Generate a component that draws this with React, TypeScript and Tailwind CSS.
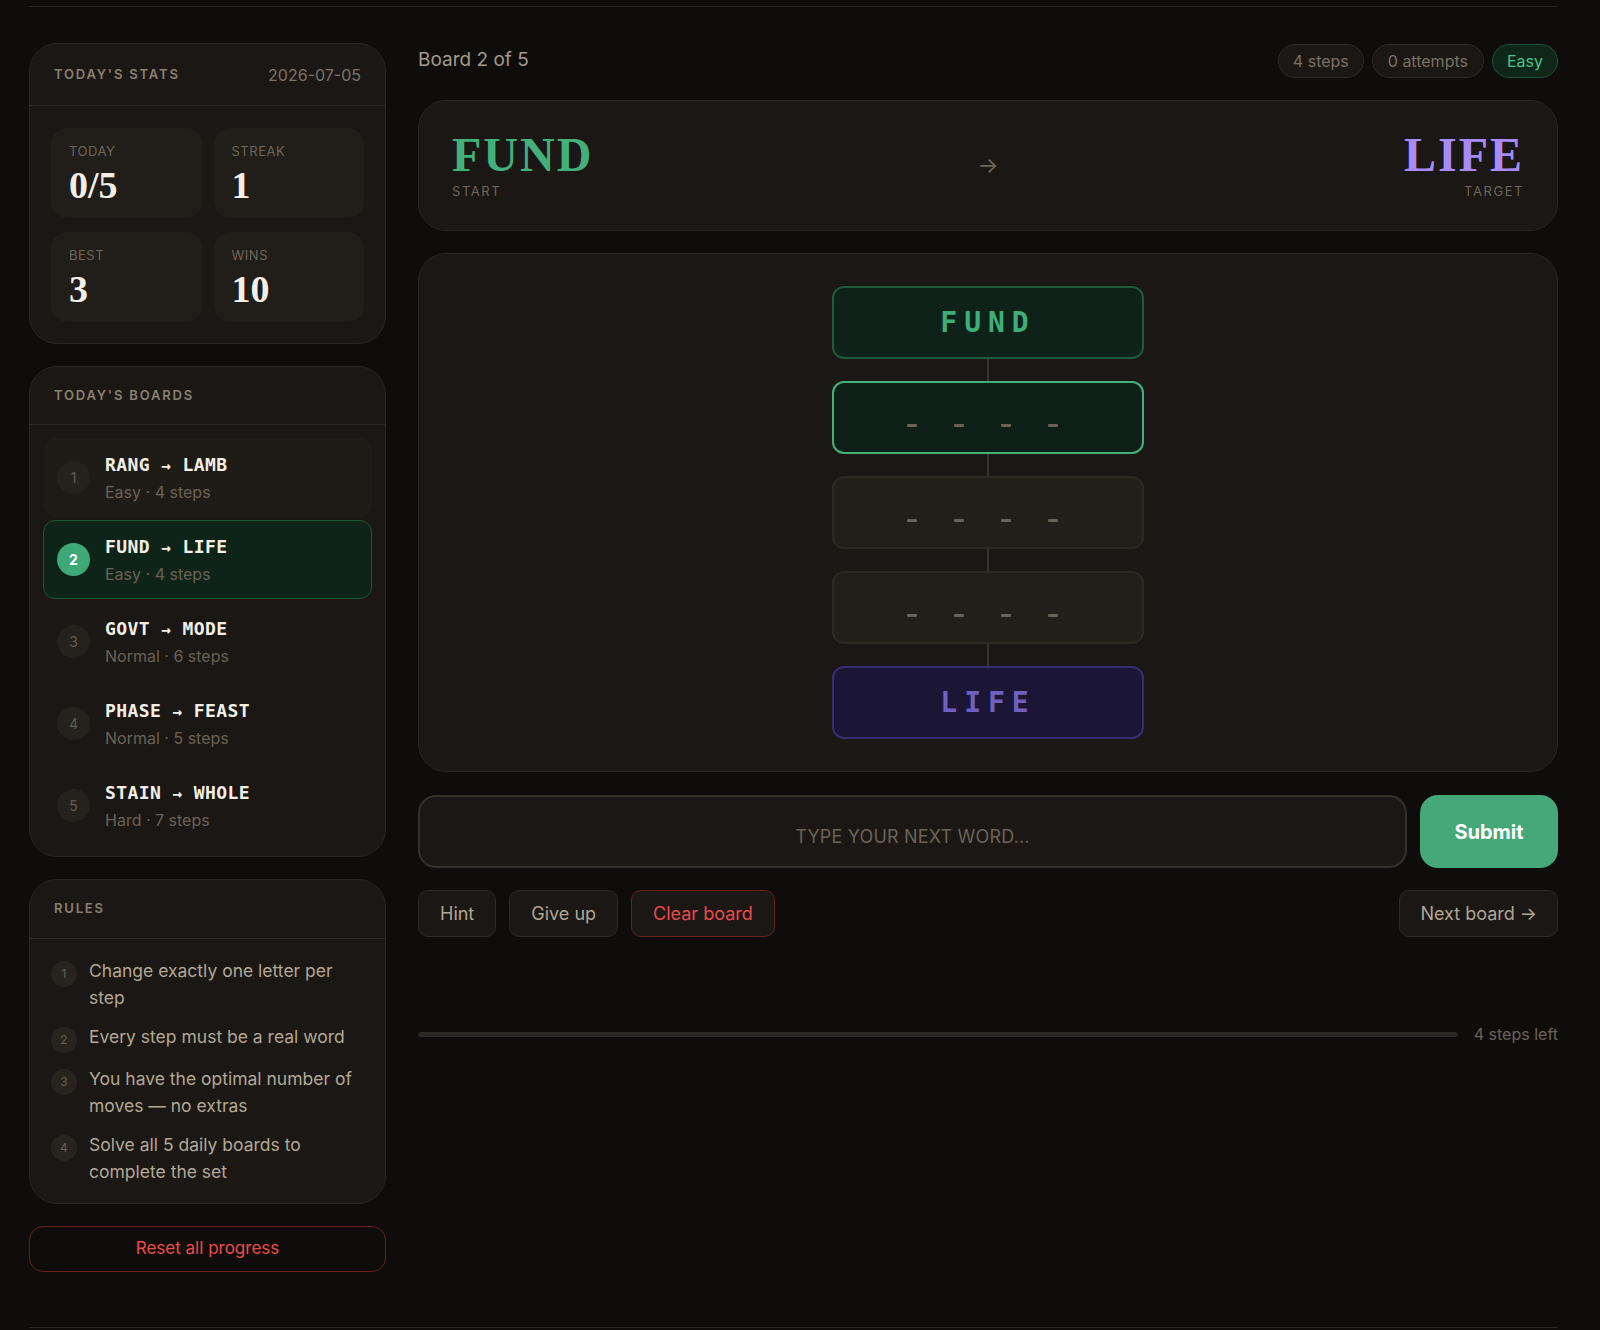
import { useState } from "react";

const boards = [
  { n: 1, from: "RANG", to: "LAMB", meta: "Easy · 4 steps", state: "done" },
  { n: 2, from: "FUND", to: "LIFE", meta: "Easy · 4 steps", state: "active" },
  { n: 3, from: "GOVT", to: "MODE", meta: "Normal · 6 steps", state: "idle" },
  { n: 4, from: "PHASE", to: "FEAST", meta: "Normal · 5 steps", state: "idle" },
  { n: 5, from: "STAIN", to: "WHOLE", meta: "Hard · 7 steps", state: "idle" },
];

const rules = [
  "Change exactly one letter per step",
  "Every step must be a real word",
  "You have the optimal number of moves — no extras",
  "Solve all 5 daily boards to complete the set",
];

const sans = "font-['Inter','Noto_Sans',sans-serif]";
const serif = "font-['Liberation_Serif','DejaVu_Serif',serif]";
const mono = "font-['DejaVu_Sans_Mono','Liberation_Mono',monospace]";

function StatTile({ label, value }: { label: string; value: string }) {
  return (
    <div className="h-[90px] rounded-[16px] bg-[#211d18] px-[18px] pt-[15px]">
      <div className="text-[13px] leading-[16px] tracking-[0.04em] text-[#6e665a]">{label}</div>
      <div className={`${serif} mt-[7px] text-[38px] leading-none font-bold text-[#f4efe6]`}>{value}</div>
    </div>
  );
}

function Dashes() {
  return (
    <div className="flex gap-[37px] pt-[16px] pr-[11px]">
      {[0, 1, 2, 3].map((i) => (
        <span key={i} className="h-[3px] w-[10px] rounded-[1px] bg-[#6a6256]" />
      ))}
    </div>
  );
}

export default function App() {
  const [word, setWord] = useState("");

  return (
    <div className={`${sans} min-h-[1330px] bg-[#0f0d0b] pt-[6px]`}>
      <div className="ml-[29px] w-[1529px] border-t border-[#2a2621] pt-[36px]">
        <div className="grid grid-cols-[357px_1fr] gap-[32px]">
          {/* sidebar */}
          <div className="flex flex-col gap-[22px]">
            <div className="rounded-[28px] border border-[#2a2621] bg-[#1a1714]">
              <div className="flex h-[62px] items-center justify-between border-b border-[#2e2a24] px-[24px]">
                <span className="text-[13px] font-semibold tracking-[0.14em] text-[#8a8071]">TODAY'S STATS</span>
                <span className="text-[16px] text-[#7d7466]">2026-07-05</span>
              </div>
              <div className="grid grid-cols-2 gap-x-[12px] gap-y-[14px] px-[21px] pt-[22px] pb-[21px]">
                <StatTile label="TODAY" value="0/5" />
                <StatTile label="STREAK" value="1" />
                <StatTile label="BEST" value="3" />
                <StatTile label="WINS" value="10" />
              </div>
            </div>

            <div className="rounded-[28px] border border-[#2a2621] bg-[#1a1714]">
              <div className="flex h-[58px] items-center border-b border-[#2e2a24] px-[24px]">
                <span className="text-[13px] font-semibold tracking-[0.14em] text-[#8a8071]">TODAY'S BOARDS</span>
              </div>
              <div className="flex flex-col gap-[3px] p-[13px] pb-[11px]">
                {boards.map((b) => (
                  <div
                    key={b.n}
                    className={`flex h-[79px] items-center gap-[15px] rounded-[12px] border px-[13px] ${
                      b.state === "active"
                        ? "border-[#1f5637] bg-[#0f2418]"
                        : b.state === "done"
                          ? "border-transparent bg-[#1f1b17]"
                          : "border-transparent"
                    }`}
                  >
                    <div
                      className={`flex h-[33px] w-[33px] shrink-0 items-center justify-center rounded-full text-[14px] ${
                        b.state === "active" ? "bg-[#3fa877] font-bold text-white" : "bg-[#25211c] text-[#645c50]"
                      }`}
                    >
                      {b.n}
                    </div>
                    <div className="flex flex-col gap-[5px]">
                      <div className={`${mono} text-[18px] leading-[22px] font-bold tracking-[0.4px] text-[#f4efe6]`}>
                        {b.from} <span className="text-[16px]">→</span> {b.to}
                      </div>
                      <div className="text-[16px] leading-[20px] text-[#6a6256]">{b.meta}</div>
                    </div>
                  </div>
                ))}
              </div>
            </div>

            <div className="rounded-[28px] border border-[#2a2621] bg-[#1a1714]">
              <div className="flex h-[59px] items-center border-b border-[#2e2a24] px-[24px]">
                <span className="text-[13px] font-semibold tracking-[0.14em] text-[#8a8071]">RULES</span>
              </div>
              <div className="flex flex-col gap-[12px] px-[21px] pt-[18px] pb-[18px]">
                {rules.map((r, i) => (
                  <div key={i} className="flex gap-[12px]">
                    <div className="mt-[4px] flex h-[26px] w-[26px] shrink-0 items-center justify-center rounded-full bg-[#27231e] text-[12px] text-[#675f53]">
                      {i + 1}
                    </div>
                    <p className="text-[17.5px] leading-[27px] text-[#b3a894]">{r}</p>
                  </div>
                ))}
              </div>
            </div>

            <button className="h-[46px] rounded-[14px] border border-[#6a2020] text-[17px] text-[#ec4a4a]">
              Reset all progress
            </button>
          </div>

          {/* main */}
          <div className="flex flex-col">
            <div className="flex h-[35px] items-center justify-between">
              <span className="text-[19px] text-[#a39a8b]">Board 2 of 5</span>
              <div className="flex gap-[8px]">
                <span className="flex h-[34px] items-center rounded-full border border-[#2e2a24] bg-[#1a1714] px-[14px] text-[16px] text-[#7a7165]">
                  4 steps
                </span>
                <span className="flex h-[34px] items-center rounded-full border border-[#2e2a24] bg-[#1a1714] px-[15px] text-[16px] text-[#7a7165]">
                  0 attempts
                </span>
                <span className="flex h-[34px] items-center rounded-full border border-[#1d5234] bg-[#0f2719] px-[14px] text-[16px] text-[#4cc38a]">
                  Easy
                </span>
              </div>
            </div>

            <div className="mt-[22px] grid h-[131px] grid-cols-3 items-center rounded-[28px] border border-[#2a2621] bg-[#1a1714] px-[33px]">
              <div className="pt-[2px]">
                <div className={`${serif} text-[48px] leading-[48px] font-bold tracking-[2px] text-[#43b07c]`}>FUND</div>
                <div className="mt-[3px] text-[13px] tracking-[0.12em] text-[#6e665a]">START</div>
              </div>
              <div className="text-center text-[22px] text-[#6e665a]">→</div>
              <div className="flex flex-col items-end pt-[2px]">
                <div className={`${serif} text-[48px] leading-[48px] font-bold tracking-[2px] text-[#a78bfa]`}>LIFE</div>
                <div className="mt-[3px] text-[13px] tracking-[0.12em] text-[#6e665a]">TARGET</div>
              </div>
            </div>

            <div className="mt-[22px] flex flex-col items-center rounded-[28px] border border-[#2a2621] bg-[#1a1714] py-[32px]">
              <div className="flex h-[73px] w-[312px] items-center justify-center rounded-[12px] border-2 border-[#1f5a3c] bg-[#0f2219]">
                <span className={`${mono} text-[28px] font-bold tracking-[7px] text-[#3fae78]`}>FUND</span>
              </div>
              <div className="h-[22px] w-[2px] bg-[#3a332b]" />
              <div className="flex h-[73px] w-[312px] items-center justify-center rounded-[12px] border-2 border-[#43b17e] bg-[#0e1f17]">
                <Dashes />
              </div>
              <div className="h-[22px] w-[2px] bg-[#3a332b]" />
              <div className="flex h-[73px] w-[312px] items-center justify-center rounded-[12px] border-2 border-[#2c2822] bg-[#221f1a]">
                <Dashes />
              </div>
              <div className="h-[22px] w-[2px] bg-[#3a332b]" />
              <div className="flex h-[73px] w-[312px] items-center justify-center rounded-[12px] border-2 border-[#2c2822] bg-[#221f1a]">
                <Dashes />
              </div>
              <div className="h-[22px] w-[2px] bg-[#3a332b]" />
              <div className="flex h-[73px] w-[312px] items-center justify-center rounded-[12px] border-2 border-[#352e70] bg-[#1b1636]">
                <span className={`${mono} text-[28px] font-bold tracking-[7px] text-[#7060bf]`}>LIFE</span>
              </div>
            </div>

            <div className="mt-[23px] flex gap-[13px]">
              <input
                value={word}
                onChange={(e) => setWord(e.target.value)}
                placeholder="TYPE YOUR NEXT WORD..."
                className="h-[73px] flex-1 rounded-[18px] border-2 border-[#34302a] bg-[#1a1714] pt-[9px] text-center text-[18px] tracking-[0.01em] text-[#e8e1d4] outline-none placeholder:text-[#6b6357]"
              />
              <button className="h-[73px] w-[138px] rounded-[18px] bg-[#45a878] text-[20px] font-bold text-white">
                Submit
              </button>
            </div>

            <div className="mt-[22px] flex items-center">
              <div className="flex gap-[13px]">
                <button className="h-[47px] rounded-[10px] border border-[#2e2a24] bg-[#1a1714] px-[21px] text-[18px] text-[#b0a593]">
                  Hint
                </button>
                <button className="h-[47px] rounded-[10px] border border-[#2e2a24] bg-[#1a1714] px-[21px] text-[18px] text-[#b0a593]">
                  Give up
                </button>
                <button className="h-[47px] rounded-[10px] border border-[#6a2020] bg-[#1a1714] px-[21px] text-[18px] text-[#ec4a4a]">
                  Clear board
                </button>
              </div>
              <button className="ml-auto h-[47px] rounded-[10px] border border-[#2e2a24] bg-[#1a1714] px-[20px] text-[18px] text-[#b0a593]">
                Next board →
              </button>
            </div>

            <div className="mt-[85px] flex items-center gap-[16px]">
              <div className="h-[5px] flex-1 rounded-full bg-[#2b2823]" />
              <span className="text-[16px] text-[#6b6357]">4 steps left</span>
            </div>
          </div>
        </div>

        <div className="mt-[55px] border-t border-[#2a2621]" />
      </div>
    </div>
  );
}
